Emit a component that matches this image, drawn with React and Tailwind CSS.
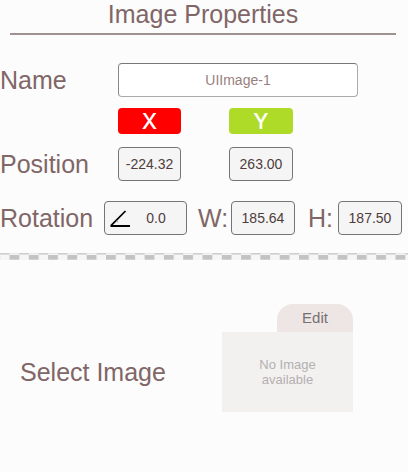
import React, { useState } from 'react';

const fieldStyle =
  'h-[34px] rounded border border-[#747474] bg-[#f5f5f5] text-center text-sm text-[#4f3d3d] focus:outline-none';

const axisStyle =
  "flex h-[26px] items-center justify-center rounded font-['Inter',sans-serif] text-[22px] font-medium text-white";

const NumberField = ({ id, label, value, onChange, className = 'w-16' }) => (
  <input
    id={id}
    type="text"
    inputMode="decimal"
    aria-label={label}
    value={value}
    onChange={(e) => onChange(e.target.value)}
    className={`${fieldStyle} ${className}`}
  />
);

const AngleIcon = () => (
  <svg className="pointer-events-none absolute left-1.5 top-2 h-5 w-5" viewBox="0 0 20 20" fill="none" stroke="#000" aria-hidden="true">
    <path strokeWidth="1.7" d="M15.5 2L1 16.6" />
    <path strokeWidth="2" d="M0.5 17H20" />
    <path strokeWidth="0.7" stroke="#777" d="M6.5 11.5Q7.5 12.5 7.7 13.5" />
  </svg>
);

const DashedDivider = () => (
  <svg className="block h-2 w-full" aria-hidden="true">
    <defs>
      <pattern id="dashes" x="9.5" y="0" width="19.3" height="8" patternUnits="userSpaceOnUse">
        <rect x="0" y="0" width="19.3" height="7" fill="#f7f5f5" />
        <rect x="0" y="0" width="19.3" height="1" fill="#e9e7e7" />
        <rect x="9.8" y="0" width="9.5" height="1.6" fill="#cfcdcd" />
        <rect x="0" y="2" width="9.8" height="4.7" fill="#c4c3c3" />
      </pattern>
    </defs>
    <rect width="100%" height="8" fill="url(#dashes)" />
  </svg>
);

const App = () => {
  const [name, setName] = useState('UIImage-1');
  const [x, setX] = useState('-224.32');
  const [y, setY] = useState('263.00');
  const [rotation, setRotation] = useState('0.0');
  const [width, setWidth] = useState('185.64');
  const [height, setHeight] = useState('187.50');

  return (
    <main className="min-h-screen bg-[#fcfcfc] font-['Liberation_Sans',Arial,sans-serif] text-[25px] leading-7 text-[#806666]">
      <h1 className="ml-2.5 mr-3 border-b-2 border-[#9d928f] pb-[5px] text-center">Image Properties</h1>

      {/* Name */}
      <div className="mt-7 flex items-center">
        <label htmlFor="name" className="w-[118px] shrink-0">Name</label>
        <input
          id="name"
          type="text"
          value={name}
          onChange={(e) => setName(e.target.value)}
          className="h-[34px] w-60 rounded border border-[#aaa] border-t-[#777] border-l-[#888] bg-white text-center text-sm text-[#987f7f] focus:outline-none"
        />
      </div>

      {/* Position */}
      <div className="mt-[11px] grid grid-cols-[118px_63px_112px] items-center gap-y-[13px]">
        <label htmlFor="pos-x" className={`${axisStyle} col-start-2 bg-[#ff0000]`}>X</label>
        <label htmlFor="pos-y" className={`${axisStyle} w-16 justify-self-end bg-[#aedb28]`}>Y</label>
        <span className="col-start-1">Position</span>
        <NumberField id="pos-x" label="X" value={x} onChange={setX} className="w-full" />
        <NumberField id="pos-y" label="Y" value={y} onChange={setY} className="w-16 justify-self-end" />
      </div>

      {/* Rotation and size */}
      <div className="mt-5 flex items-center">
        <label htmlFor="rotation" className="w-[104px] shrink-0">Rotation</label>
        <div className="relative w-[83px] shrink-0">
          <NumberField id="rotation" label="Rotation" value={rotation} onChange={setRotation} className="block w-full pl-[21px]" />
          <AngleIcon />
        </div>
        <label htmlFor="width" className="ml-[11px] w-[33px] shrink-0">W:</label>
        <NumberField id="width" label="Width" value={width} onChange={setWidth} className="w-16 shrink-0" />
        <label htmlFor="height" className="ml-[13px] w-[30px] shrink-0">H:</label>
        <NumberField id="height" label="Height" value={height} onChange={setHeight} className="w-16 shrink-0" />
      </div>

      <div className="mt-[18px]">
        <DashedDivider />
      </div>

      {/* Image picker */}
      <section className="mt-[43px] flex pl-5">
        <h2 className="w-[202px] shrink-0 pt-[54px]">Select Image</h2>
        <div className="flex w-[131px] flex-col">
          <button type="button" className="h-7 w-[76px] self-end rounded-t-2xl bg-[#eee5e5] text-[15px] text-[#777171]">
            Edit
          </button>
          <div className="flex h-20 items-center justify-center bg-[#f2f1f0] px-8 text-center text-[13px] leading-[15px] text-[#b3b0b0]">
            No Image available
          </div>
        </div>
      </section>
    </main>
  );
};

export default App;
